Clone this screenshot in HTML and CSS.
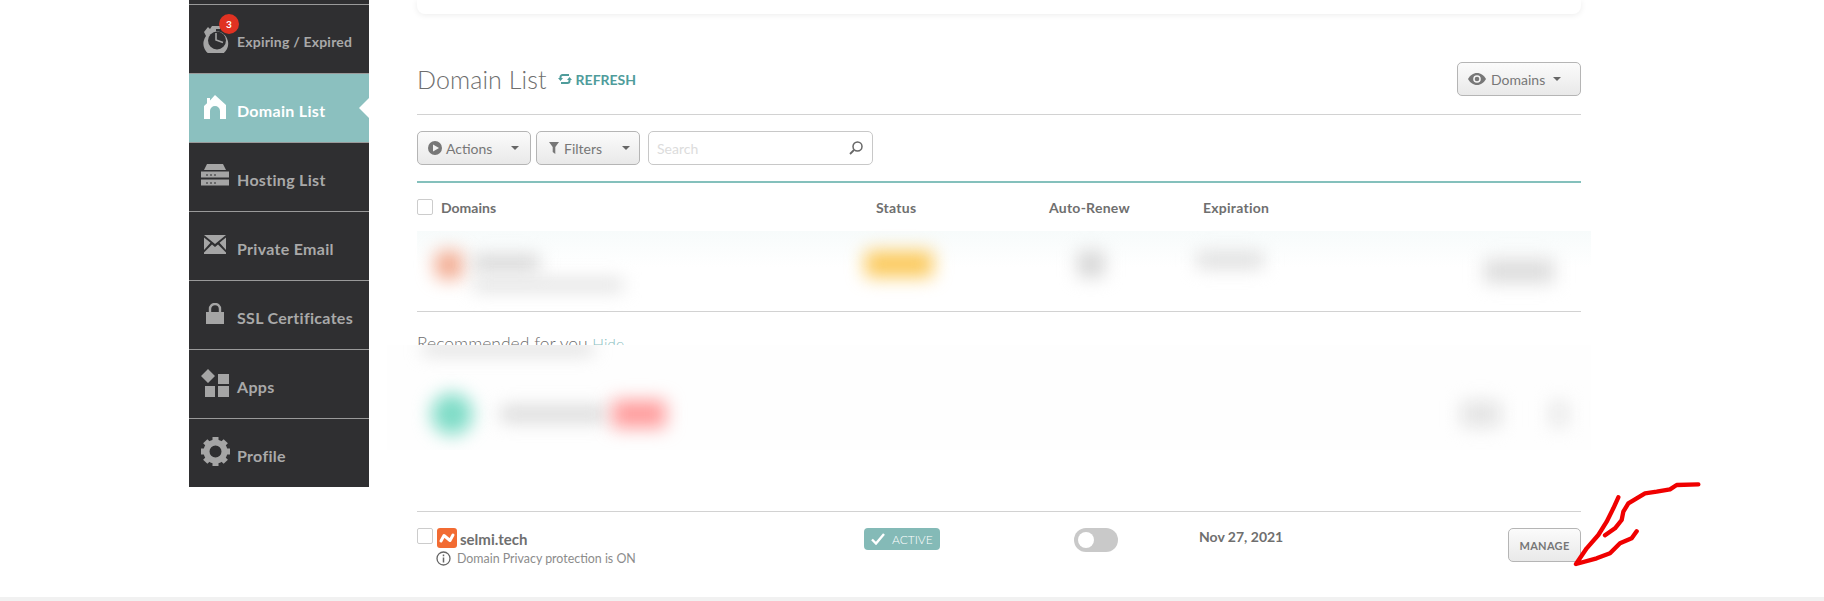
FILE: index.html
```html
<!DOCTYPE html>
<html>
<head>
	<title>Domain List</title>
	<link rel="stylesheet" href="styles.css">
</head>
<body>
	<div class="page">
		<div class="sidebar">
			<div class="side-stub"></div>
			<a class="side-item">
				<span class="side-icon side-icon-watch">
					<svg width="28" height="30" viewBox="0 0 28 30"><path d="M2 9l4-5 2 2 2-3h8v3h-4v2.200A12.400 12.400 0 1 1 4 13z" fill="#a5a5a5"/><circle cx="15" cy="17.500" r="9" fill="#2f2f31"/><path d="M14 10v7l7 2.500" fill="none" stroke="#a5a5a5" stroke-width="1.600"/></svg>
					<span class="side-badge">3</span>
				</span>
				<span class="side-label side-label-small">Expiring / Expired</span>
			</a>
			<a class="side-item side-active">
				<span class="side-icon">
					<svg width="22" height="24" viewBox="0 0 22 24"><path d="M0 24V11l3-2.800V3h3v2.400L11 0l11 10v14h-6v-8a5 5 0 0 0-10 0v8z" fill="#fff"/></svg>
				</span>
				<span class="side-label">Domain List</span>
				<span class="side-notch"></span>
			</a>
			<a class="side-item">
				<span class="side-icon">
					<svg width="28" height="23" viewBox="0 0 28 23"><path d="M6 0h16l3 6H3z" fill="#a5a5a5"/><path d="M0 7.500h28v6H0zM0 15.500h28v6H0z" fill="#a5a5a5"/><path d="M5 10.500h2v1H5zM9 10.500h2v1H9zM13 10.500h2v1h-2zM5 18.500h2v1H5zM9 18.500h2v1H9zM13 18.500h2v1h-2z" fill="#2f2f31"/></svg>
				</span>
				<span class="side-label">Hosting List</span>
			</a>
			<a class="side-item">
				<span class="side-icon">
					<svg width="22" height="19" viewBox="0 0 22 19"><path d="M0 0h22L11 9zM0 2.500l6.500 5.300L0 15zM22 2.500l-6.500 5.300L22 15zM0 19v-1.500l8-8 3 2.500 3-2.500 8 8V19z" fill="#a5a5a5"/></svg>
				</span>
				<span class="side-label">Private Email</span>
			</a>
			<a class="side-item">
				<span class="side-icon">
					<svg width="18" height="22" viewBox="0 0 18 22"><path d="M0 9h18v12H0z" fill="#a5a5a5"/><path d="M4 10V6a5 5 0 0 1 10 0v4" fill="none" stroke="#a5a5a5" stroke-width="2.400"/></svg>
				</span>
				<span class="side-label">SSL Certificates</span>
			</a>
			<a class="side-item">
				<span class="side-icon">
					<svg width="28" height="28" viewBox="0 0 28 28"><path d="M7 0l7 7-7 7-7-7zM17 5h11v10H17zM4 17h10v11H4zM17 17h11v11H17z" fill="#a5a5a5"/></svg>
				</span>
				<span class="side-label">Apps</span>
			</a>
			<a class="side-item side-last">
				<span class="side-icon">
					<svg width="29" height="29" viewBox="-14.500 -14.500 29 29"><circle r="9" fill="none" stroke="#a5a5a5" stroke-width="6"/><g fill="#a5a5a5"><rect x="-3" y="-14.500" width="6" height="6"/><rect x="-3" y="8.500" width="6" height="6"/><rect x="8.500" y="-3" width="6" height="6"/><rect x="-14.500" y="-3" width="6" height="6"/><rect x="-3" y="-14.500" width="6" height="6" transform="rotate(45)"/><rect x="-3" y="8.500" width="6" height="6" transform="rotate(45)"/><rect x="8.500" y="-3" width="6" height="6" transform="rotate(45)"/><rect x="-14.500" y="-3" width="6" height="6" transform="rotate(45)"/></g></svg>
				</span>
				<span class="side-label">Profile</span>
			</a>
		</div>

		<div class="main">
			<div class="top-card"></div>

			<div class="title-bar">
				<h1>Domain List</h1>
				<a class="refresh">
					<svg width="14" height="12" viewBox="0 0 14 12"><path d="M2.500 5.500V4a2 2 0 0 1 2-2H11M11.500 6.500V8a2 2 0 0 1-2 2H3" fill="none" stroke="#4f9c9b" stroke-width="2"/><path d="M0 5h5L2.500 8zM14 7H9l2.500-3z" fill="#4f9c9b"/></svg>
					REFRESH
				</a>
				<button class="btn btn-view">
					<svg width="18" height="12" viewBox="0 0 18 12"><path d="M0 6c2-3.500 5.200-6 9-6s7 2.500 9 6c-2 3.500-5.200 6-9 6S2 9.500 0 6z" fill="#777"/><circle cx="9" cy="6" r="3.800" fill="#f5f5f5"/><circle cx="9" cy="6" r="2.300" fill="#777"/></svg>
					<span>Domains</span>
					<i class="caret"></i>
				</button>
			</div>

			<div class="toolbar">
				<button class="btn btn-actions">
					<svg width="14" height="14" viewBox="0 0 14 14"><circle cx="7" cy="7" r="7" fill="#777"/><path d="M5 3.500v7l6-3.500z" fill="#f2f2f2"/></svg>
					<span>Actions</span>
					<i class="caret"></i>
				</button>
				<button class="btn btn-filters">
					<svg width="10" height="12" viewBox="0 0 10 12"><path d="M0 0h10L6.300 5v7L3.700 10V5z" fill="#777"/></svg>
					<span>Filters</span>
					<i class="caret"></i>
				</button>
				<div class="search">
					<span>Search</span>
					<svg width="14" height="14" viewBox="0 0 14 14"><circle cx="8.500" cy="5.500" r="4.500" fill="none" stroke="#666" stroke-width="1.500"/><path d="M5 9l-4 4" stroke="#666" stroke-width="1.800"/></svg>
				</div>
			</div>

			<div class="list-head">
				<div class="head-domains"><span class="check"></span>Domains</div>
				<div class="head-col">Status</div>
				<div class="head-col">Auto-Renew</div>
				<div class="head-col">Expiration</div>
			</div>

			<div class="blur-row">
				<span class="smudge s-logo"></span>
				<div class="s-lines">
					<span class="smudge s-line1"></span>
					<span class="smudge s-line2"></span>
				</div>
				<span class="smudge s-status"></span>
				<span class="smudge s-renew"></span>
				<span class="smudge s-date"></span>
				<span class="smudge s-manage"></span>
			</div>

			<div class="recommend">Recommended for you <a>Hide</a></div>

			<div class="blur-panel">
				<span class="smudge s-rectext"></span>
				<div class="panel-row">
					<span class="smudge s-circle"></span>
					<span class="smudge s-name"></span>
					<span class="smudge s-pink"></span>
					<span class="smudge s-buy"></span>
					<span class="smudge s-more"></span>
				</div>
			</div>

			<div class="domain-row">
				<div class="domain-cell">
					<div class="domain-name">
						<span class="check"></span>
						<svg class="logo" width="20" height="20" viewBox="0 0 20 20"><rect width="20" height="20" rx="3" fill="#f26b32"/><path d="M4 13L7 7.500 13 12.500 16 7" fill="none" stroke="#fff" stroke-width="3" stroke-linecap="round" stroke-linejoin="round"/></svg>
						<span class="domain-text">selmi.tech</span>
					</div>
					<div class="domain-note">
						<svg width="15" height="15" viewBox="0 0 15 15"><circle cx="7.500" cy="7.500" r="6.500" fill="none" stroke="#666" stroke-width="1.300"/><path d="M7.500 6.500v5M7.500 3.500v1.700" stroke="#666" stroke-width="1.500"/></svg>
						Domain Privacy protection is ON
					</div>
				</div>
				<div class="badge">
					<svg width="14" height="12" viewBox="0 0 14 12"><path d="M1 6.500l4 4L13 1" fill="none" stroke="#fff" stroke-width="2.400"/></svg>
					ACTIVE
				</div>
				<div class="toggle"><span></span></div>
				<div class="date">Nov 27, 2021</div>
				<button class="btn btn-manage">MANAGE</button>
			</div>
		</div>
	</div>
	<div class="footer-bar"></div>

	<svg class="scribble" width="280" height="141" viewBox="0 0 840 423">
		<path d="M745 73l-65 2-20 13-40 7-35 5-25 15-25 15-15 25-5 25-20 25-30 21" />
		<path d="M505 112l-15 33-20 40-25 40-35 40-32 47 62-17 40-15 30-30 35-15 15-21" />
	</svg>
</body>
</html>
```

FILE: styles.css
```css
body {
  margin: 0;
  height: 601px;
  overflow: hidden;
  background: #fff;
  font-family: "Lato", sans-serif;
  color: #777;
}

.page {
  display: flex;
  align-items: flex-start;
  height: 597px;
  padding-left: 189px;
  overflow: hidden;
}

.footer-bar {
  height: 4px;
  background: #f1f1f1;
}

/* sidebar */
.sidebar {
  width: 180px;
  flex: none;
  background: #2f2f31;
}

.side-stub {
  height: 4px;
  border-bottom: 1px solid #9a9a9a;
}

.side-item {
  display: flex;
  align-items: center;
  height: 68px;
  border-bottom: 1px solid #9a9a9a;
  color: #a9a9a9;
  font-weight: 700;
  font-size: 16px;
  letter-spacing: 0.3px;
}

.side-last {
  border-bottom: 0;
}

.side-active {
  position: relative;
  background: #8bc0bf;
  color: #fff;
}

.side-notch {
  position: absolute;
  right: 0;
  top: 24px;
  border: 10px solid transparent;
  border-left: 0;
  border-right-color: #fff;
}

.side-icon {
  position: relative;
  display: flex;
  justify-content: center;
  width: 30px;
  margin-left: 11px;
  margin-right: 7px;
  margin-top: -3px;
}

.side-icon-watch svg {
  margin-left: 2px;
}

.side-label {
  margin-top: 5px;
}

.side-label-small {
  font-size: 14px;
  letter-spacing: 0.2px;
}

.side-badge {
  position: absolute;
  left: 19px;
  top: -9px;
  width: 20px;
  height: 20px;
  border-radius: 50%;
  background: #e03222;
  color: #fff;
  font-size: 10px;
  line-height: 20px;
  text-align: center;
}

/* main column */
.main {
  width: 1164px;
  margin-left: 48px;
  flex: none;
}

.top-card {
  height: 14px;
  background: #fff;
  border-radius: 0 0 8px 8px;
  box-shadow: 0 1px 6px rgba(0, 0, 0, 0.08);
}

.title-bar {
  display: flex;
  align-items: flex-end;
  height: 82px;
  padding-bottom: 18px;
  border-bottom: 1px solid #d2d2d2;
}

.title-bar h1 {
  margin: 0;
  height: 34px;
  font-size: 25px;
  font-weight: 300;
  line-height: 34px;
  color: #6e6e6e;
  letter-spacing: 0.1px;
}

.refresh {
  display: flex;
  align-items: center;
  gap: 4px;
  height: 34px;
  margin-left: 11px;
  font-size: 14px;
  font-weight: 700;
  color: #4f9c9b;
}

.btn {
  display: inline-flex;
  align-items: center;
  height: 34px;
  padding: 0;
  box-sizing: border-box;
  border: 1px solid #b5b5b5;
  border-radius: 5px;
  background: linear-gradient(#fbfbfb, #e9e9e9);
  font-family: inherit;
  font-size: 14px;
  color: #777;
}

.caret {
  border: 4px solid transparent;
  border-top: 4px solid #666;
  border-bottom: 0;
}

.btn-view {
  width: 124px;
  margin-left: auto;
  padding-left: 10px;
}

.btn-view span {
  margin-left: 5px;
}

.btn-view .caret {
  margin-left: 8px;
}

.toolbar {
  display: flex;
  padding: 16px 0;
  border-bottom: 2px solid #84c0bc;
}

.btn-actions {
  width: 114px;
  padding-left: 10px;
}

.btn-actions span {
  margin-left: 4px;
}

.btn-actions .caret {
  margin-left: 19px;
}

.btn-filters {
  width: 104px;
  margin-left: 5px;
  padding-left: 12px;
}

.btn-filters span {
  margin-left: 5px;
}

.btn-filters .caret {
  margin-left: 20px;
}

.search {
  display: flex;
  align-items: center;
  justify-content: space-between;
  width: 225px;
  height: 34px;
  box-sizing: border-box;
  margin-left: 8px;
  padding: 0 9px 0 8px;
  border: 1px solid #c8c8c8;
  border-radius: 5px;
  font-size: 14px;
  color: #dcdcdc;
}

.list-head {
  display: grid;
  grid-template-columns: 459px 173px 154px 1fr;
  align-items: center;
  height: 48px;
  font-size: 14px;
  font-weight: 700;
  color: #6f6f6f;
}

.head-col {
  letter-spacing: 0.25px;
}

.head-domains {
  display: flex;
  align-items: center;
  gap: 8px;
}

.check {
  display: inline-block;
  width: 14px;
  height: 14px;
  flex: none;
  border: 1px solid #ccc;
  border-radius: 2px;
  background: #fff;
}

/* blurred parts */
.smudge {
  display: block;
  flex: none;
  filter: blur(9px);
}

.blur-row {
  display: flex;
  height: 80px;
  margin-right: -10px;
  box-sizing: border-box;
  padding-top: 20px;
  background: linear-gradient(#f7fbfb, #fff 45%);
}

.s-logo {
  width: 28px;
  height: 28px;
  margin-left: 18px;
  background: #f2a98e;
  border-radius: 8px;
}

.s-lines {
  width: 166px;
  margin-left: 10px;
}

.s-line1 {
  width: 66px;
  height: 14px;
  margin-top: 5px;
  background: #cfcfcf;
}

.s-line2 {
  width: 150px;
  height: 10px;
  margin-top: 10px;
  background: #d8d8d8;
}

.s-status {
  width: 68px;
  height: 26px;
  margin-left: 226px;
  background: #fbc95a;
  border-radius: 4px;
}

.s-renew {
  width: 26px;
  height: 26px;
  margin-left: 145px;
  background: #d4d4d4;
}

.s-date {
  width: 66px;
  height: 16px;
  margin-left: 93px;
  margin-top: 1px;
  background: #dcdcdc;
}

.s-manage {
  width: 70px;
  height: 24px;
  margin-left: 221px;
  margin-top: 8px;
  background: #dcdcdc;
}

.recommend {
  height: 33px;
  border-top: 1px solid #d2d2d2;
  overflow: hidden;
  font-size: 17.500px;
  font-weight: 300;
  line-height: 64px;
  color: #6e6e6e;
}

.recommend a {
  color: #8bc0bf;
  font-size: 15.500px;
}

.blur-panel {
  height: 105px;
  margin: 0 -10px 61px -30px;
  background: #fefefe;
  overflow: hidden;
}

.s-rectext {
  width: 170px;
  height: 8px;
  margin-left: 36px;
  background: #cfcfcf;
}

.panel-row {
  display: flex;
  margin-top: 40px;
}

.s-circle {
  width: 42px;
  height: 42px;
  margin-left: 44px;
  border-radius: 50%;
  background: #7fdcc7;
}

.s-name {
  width: 105px;
  height: 14px;
  margin-left: 28px;
  margin-top: 14px;
  background: #d4d4d4;
}

.s-pink {
  width: 54px;
  height: 28px;
  margin-left: 6px;
  margin-top: 7px;
  border-radius: 4px;
  background: #ff9c9c;
}

.s-buy {
  width: 40px;
  height: 26px;
  margin-left: 795px;
  margin-top: 8px;
  background: #e4e4e4;
}

.s-more {
  width: 18px;
  height: 26px;
  margin-left: 49px;
  margin-top: 8px;
  background: #e8e8e8;
}

/* the visible row */
.domain-row {
  display: flex;
  align-items: flex-start;
  height: 85px;
  box-sizing: border-box;
  padding-top: 16px;
  border-top: 1px solid #d2d2d2;
}

.domain-cell {
  width: 447px;
}

.domain-name {
  display: flex;
  align-items: flex-start;
}

.logo {
  margin-left: 4px;
}

.domain-text {
  margin-left: 3px;
  margin-top: 2px;
  font-size: 15px;
  font-weight: 700;
  color: #6f6f6f;
}

.domain-note {
  display: flex;
  align-items: center;
  gap: 6px;
  margin-left: 19px;
  margin-top: 3px;
  font-size: 12.400px;
  color: #8c8c8c;
}

.badge {
  display: flex;
  align-items: center;
  gap: 7px;
  width: 76px;
  height: 22px;
  box-sizing: border-box;
  padding-left: 7px;
  border-radius: 4px;
  background: #84bab7;
  color: #fff;
  font-size: 12px;
  font-weight: 300;
}

.toggle {
  width: 44px;
  height: 24px;
  box-sizing: border-box;
  margin-left: 134px;
  padding: 4px;
  border-radius: 12px;
  background: #c9c9c9;
}

.toggle span {
  display: block;
  width: 16px;
  height: 16px;
  border-radius: 50%;
  background: #fff;
}

.date {
  margin-left: 81px;
  font-size: 14px;
  font-weight: 700;
  color: #6f6f6f;
}

.btn-manage {
  justify-content: center;
  width: 73px;
  margin-left: auto;
  font-size: 11px;
  font-weight: 700;
  letter-spacing: 0.3px;
}

/* red arrow someone drew over the screenshot */
.scribble {
  position: absolute;
  left: 1450px;
  top: 460px;
  fill: none;
  stroke: #f00000;
  stroke-width: 13;
  stroke-linecap: round;
  stroke-linejoin: round;
}
```
